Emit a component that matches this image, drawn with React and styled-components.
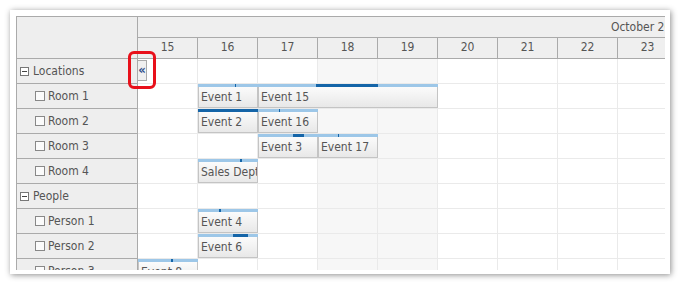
import React from "react";
import styled, { createGlobalStyle } from "styled-components";

const GlobalStyle = createGlobalStyle`
  body {
    margin: 0;
    background: #ffffff;
    font-family: "DejaVu Sans Condensed", "Liberation Sans", Arial, sans-serif;
  }
`;

const days = [15, 16, 17, 18, 19, 20, 21, 22, 23, 24, 25, 26, 27, 28, 29, 30, 31];
const weekend = [18, 19, 25, 26];

const rows = [
  { name: "Locations", group: true },
  {
    name: "Room 1",
    events: [
      { text: "Event 1", col: 1, span: 1, dark: [37, 1] },
      { text: "Event 15", col: 2, span: 3, dark: [58, 62] },
    ],
  },
  {
    name: "Room 2",
    events: [
      { text: "Event 2", col: 1, span: 1, dark: [0, 60] },
      { text: "Event 16", col: 2, span: 1, dark: [21, 1] },
    ],
  },
  {
    name: "Room 3",
    events: [
      { text: "Event 3", col: 2, span: 1, dark: [35, 11] },
      { text: "Event 17", col: 3, span: 1, dark: [20, 1] },
    ],
  },
  { name: "Room 4", events: [{ text: "Sales Dept", col: 1, span: 1, dark: [42, 2] }] },
  { name: "People", group: true },
  { name: "Person 1", events: [{ text: "Event 4", col: 1, span: 1, dark: [21, 2] }] },
  { name: "Person 2", events: [{ text: "Event 6", col: 1, span: 1, dark: [35, 15] }] },
  { name: "Person 3", events: [{ text: "Event 8", col: 0, span: 1, dark: [33, 2] }] },
];

function App() {
  return (
    <>
      <GlobalStyle />
      <Frame>
        <Viewport>
          <Scheduler>
            <HeaderRow>
              <Corner />
              <TimeHeader>
                <MonthRow>October 2014</MonthRow>
                <DayRow>
                  {days.map((d) => (
                    <DayCell key={d}>{d}</DayCell>
                  ))}
                </DayRow>
              </TimeHeader>
            </HeaderRow>

            {rows.map((row) => (
              <Row key={row.name}>
                <RowHeader $group={row.group}>
                  {row.group ? <MinusBox /> : <LeafBox />}
                  <RowName>{row.name}</RowName>
                </RowHeader>
                <RowCells>
                  {days.map((d) => (
                    <Cell key={d} $weekend={weekend.includes(d)} />
                  ))}
                  {(row.events || []).map((ev) => (
                    <Event
                      key={ev.text}
                      style={{ left: ev.col * 60, width: ev.span * 60 }}
                    >
                      <Bar>
                        <Progress style={{ left: ev.dark[0], width: ev.dark[1] }} />
                      </Bar>
                      <EventBody>{ev.text}</EventBody>
                    </Event>
                  ))}
                </RowCells>
              </Row>
            ))}

            <CollapseButton>«</CollapseButton>
          </Scheduler>
        </Viewport>
        <Highlight />
      </Frame>
    </>
  );
}

const Frame = styled.div`
  position: relative;
  margin: 10px;
  width: 660px;
  height: 264px;
  box-sizing: border-box;
  padding: 6px 5px 4px 6px;
  background: #ffffff;
  box-shadow: 1px 1px 6px rgba(0, 0, 0, 0.45);
`;

const Viewport = styled.div`
  width: 649px;
  height: 254px;
  overflow: hidden;
`;

const Scheduler = styled.div`
  position: relative;
  width: max-content;
  border-left: 1px solid #aaaaaa;
  border-top: 1px solid #aaaaaa;
  font-size: 12px;
  color: #555555;
`;

const HeaderRow = styled.div`
  display: flex;
`;

const Corner = styled.div`
  width: 120px;
  height: 41px;
  background: #eeeeee;
  border-right: 1px solid #aaaaaa;
  border-bottom: 1px solid #aaaaaa;
`;

const TimeHeader = styled.div`
  display: flex;
  flex-direction: column;
  background: #efefef;
`;

const MonthRow = styled.div`
  width: 1020px;
  height: 20px;
  line-height: 20px;
  text-align: center;
  border-bottom: 1px solid #aaaaaa;
`;

const DayRow = styled.div`
  display: flex;
  border-bottom: 1px solid #aaaaaa;
`;

const DayCell = styled.div`
  width: 59px;
  height: 20px;
  line-height: 19px;
  text-align: center;
  border-right: 1px solid #aaaaaa;
`;

const Row = styled.div`
  display: flex;
`;

const RowHeader = styled.div`
  display: flex;
  align-items: center;
  height: 24px;
  background: #eeeeee;
  border-right: 1px solid #aaaaaa;
  border-bottom: 1px solid #aaaaaa;
  padding-left: ${(p) => (p.$group ? "3px" : "18px")};
  width: ${(p) => (p.$group ? "117px" : "102px")};
`;

const MinusBox = styled.span`
  position: relative;
  width: 7px;
  height: 7px;
  margin-right: 4px;
  border: 1px solid #777777;
  background: #ffffff;

  &::after {
    content: "";
    position: absolute;
    left: 1px;
    top: 3px;
    width: 5px;
    height: 1px;
    background: #444444;
  }
`;

const LeafBox = styled.span`
  width: 8px;
  height: 8px;
  margin-right: 3px;
  border: 1px solid #888888;
  background: #fbfbfb;
`;

const RowName = styled.span`
  white-space: nowrap;
`;

const RowCells = styled.div`
  position: relative;
  display: flex;
`;

const Cell = styled.div`
  width: 59px;
  height: 24px;
  border-right: 1px solid #eaeaea;
  border-bottom: 1px solid #eaeaea;
  background: ${(p) => (p.$weekend ? "#f7f7f7" : "#ffffff")};
`;

const Event = styled.div`
  position: absolute;
  top: 0;
  height: 24px;
  display: flex;
  flex-direction: column;
`;

const Bar = styled.div`
  position: relative;
  height: 3px;
  background: #9dc7e8;
`;

const Progress = styled.div`
  position: absolute;
  top: 0;
  height: 3px;
  background: #1565a8;
`;

const EventBody = styled.div`
  flex: 1;
  box-sizing: border-box;
  padding-left: 2px;
  line-height: 20px;
  white-space: nowrap;
  overflow: hidden;
  border: 1px solid #c4c4c4;
  border-top: none;
  background: linear-gradient(to bottom, #fbfbfb, #e8e8e8);
  color: #555555;
`;

const CollapseButton = styled.div`
  position: absolute;
  left: 120px;
  top: 43px;
  width: 8px;
  height: 19px;
  border: 1px solid #aaaaaa;
  background: #f0f0f0;
  color: #2d4e8c;
  font-size: 13px;
  font-weight: bold;
  line-height: 17px;
  text-align: center;
`;

const Highlight = styled.div`
  position: absolute;
  left: 118px;
  top: 41px;
  width: 28px;
  height: 38px;
  box-sizing: border-box;
  border: 3px solid #e8101a;
  border-radius: 6px;
`;

export default App;
